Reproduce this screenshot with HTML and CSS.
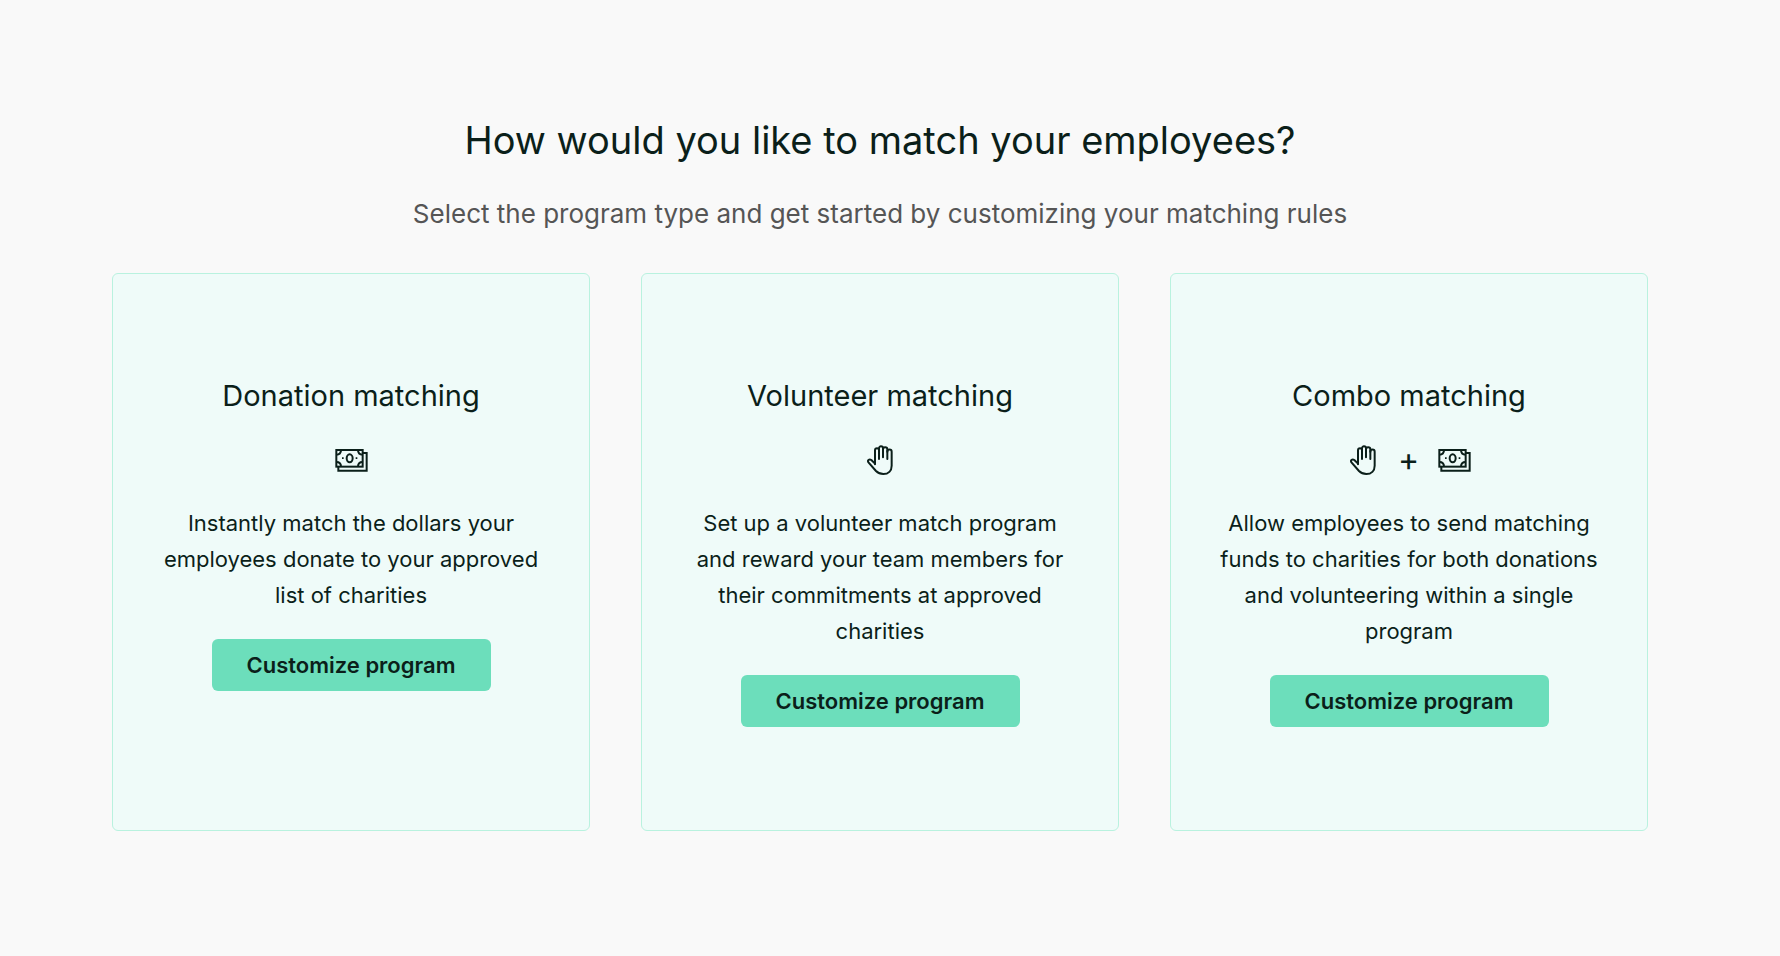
FILE: index.html
```html
<!DOCTYPE html>
<html lang="en">
  <head>
    <meta charset="UTF-8" />
    <meta name="viewport" content="width=device-width, initial-scale=1.0" />
    <title>Matching programs</title>
    <link rel="stylesheet" href="styles.css">
  </head>
  <body>
    <!-- shared icons -->
    <svg class="sprite" aria-hidden="true">
      <symbol id="icon-money" viewBox="0 0 99 72">
        <rect x="4" y="6" width="79" height="50" />
        <path d="M10 56v12h85V15H83" />
        <path d="M4 20c9 0 14-5 14-14M83 20c-9 0-14-5-14-14M4 42c9 0 14 5 14 14M83 42c-9 0-14 5-14 14" />
        <ellipse cx="44" cy="31" rx="9" ry="12" />
        <path class="dot" d="M21 28h5v5h-5zM62 28h5v5h-5z" />
      </symbol>
      <symbol id="icon-hand" viewBox="0 0 96 96">
        <path d="M33 61V19a6 6 0 0 1 12 0v26" />
        <path d="M45 19v-6a6 6 0 0 1 12 0v27" />
        <path d="M57 16a6 6 0 0 1 13 0v29" />
        <path d="M70 23a6 6 0 0 1 13 0v42c0 15-10 25-25 25-9 0-16-3-22-9L14 56c-6-7 2-12 8-8l11 11" />
      </symbol>
    </svg>

    <main class="page">
      <h1 class="heading">How would you like to match your employees?</h1>
      <p class="subheading">Select the program type and get started by customizing your matching rules</p>

      <div class="cards">
        <section class="card">
          <h2 class="card-title">Donation matching</h2>
          <div class="icons">
            <svg class="icon money"><use href="#icon-money" /></svg>
          </div>
          <p class="card-text">Instantly match the dollars your employees donate to your approved list of charities</p>
          <button type="button" class="button">Customize program</button>
        </section>

        <section class="card">
          <h2 class="card-title">Volunteer matching</h2>
          <div class="icons">
            <svg class="icon hand"><use href="#icon-hand" /></svg>
          </div>
          <p class="card-text">Set up a volunteer match program and reward your team members for their commitments at approved charities</p>
          <button type="button" class="button">Customize program</button>
        </section>

        <section class="card">
          <h2 class="card-title">Combo matching</h2>
          <div class="icons">
            <svg class="icon hand"><use href="#icon-hand" /></svg>
            <span class="plus">+</span>
            <svg class="icon money"><use href="#icon-money" /></svg>
          </div>
          <p class="card-text">Allow employees to send matching funds to charities for both donations and volunteering within a single program</p>
          <button type="button" class="button">Customize program</button>
        </section>
      </div>
    </main>
  </body>
</html>
```

FILE: styles.css
```css
* {
  box-sizing: border-box;
}

body {
  margin: 0;
  background-color: #f9f9f9;
  color: #0b1f1a;
  font-family: Inter, "Liberation Sans", sans-serif;
}

h1,
h2,
p {
  margin: 0;
  font-weight: 400;
}

.page {
  padding: 112px 132px 112px 112px;
  text-align: center;
}

.heading {
  font-size: 38px;
  line-height: 56px;
}

.subheading {
  margin: 28px 0 41px;
  color: #555;
  font-size: 26px;
  line-height: 36px;
}

.cards {
  display: grid;
  grid-template-columns: repeat(3, 1fr);
  gap: 51px;
}

.card {
  display: flex;
  flex-direction: column;
  align-items: center;
  gap: 26px;
  padding: 103px 44px;
  border: 1px solid #b9f2df;
  border-radius: 6px;
  background-color: #effbf9;
}

.card-title {
  font-size: 29px;
  line-height: 38px;
}

.icons {
  display: flex;
  justify-content: center;
  align-items: center;
  gap: 19px;
  height: 38px;
}

.icon {
  fill: none;
  stroke: currentColor;
  stroke-width: 6;
}

.money {
  width: 33px;
  height: 24px;
}

.hand {
  width: 32px;
  height: 32px;
  stroke-linecap: round;
  stroke-linejoin: round;
}

.dot {
  fill: currentColor;
  stroke: none;
}

.plus {
  font-size: 32px;
  line-height: 38px;
}

.card-text {
  font-size: 22px;
  line-height: 36px;
}

.button {
  padding: 8px 35px;
  border: 0;
  border-radius: 6px;
  background-color: #6cdebb;
  color: inherit;
  font: 600 22px/36px Inter, "Liberation Sans", sans-serif;
  cursor: pointer;
}

.sprite {
  display: none;
}
```
